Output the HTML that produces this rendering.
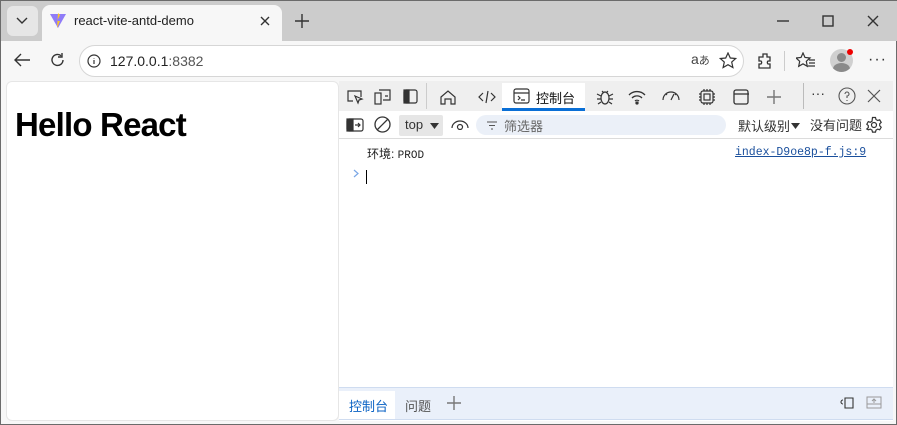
<!DOCTYPE html><html><head><meta charset="utf-8"><style>
*{margin:0;padding:0;box-sizing:border-box}
body{width:897px;height:425px;overflow:hidden;background:#f7f7f7;font-family:"Liberation Sans","Noto Sans CJK SC",sans-serif;position:relative;border:1px solid #6b6b6b}
.a{position:absolute}
.ic{position:absolute;stroke:#333;fill:none;stroke-width:1.4}
</style></head><body>
<div class="a" style="left:0;top:0;width:897px;height:40px;background:#cccccc"></div>
<div class="a" style="left:6px;top:5px;width:31px;height:30px;background:#e6e6e6;border-radius:6px"></div>
<svg class="ic" style="left:14px;top:14px" width="14" height="10"><path d="M2 3l5 5 5-5"/></svg>
<div class="a" style="left:41px;top:4px;width:240px;height:36px;background:#f7f7f7;border-radius:8px 8px 0 0"></div>
<svg class="a" style="left:48px;top:11px" width="18" height="17"><path d="M1 2l8 14 8-14z" fill="#8f7cf8"/><path d="M9 1l2 2-3 6 3 0-3 7" fill="#ffc820"/></svg>
<div class="a" style="left:73px;top:12px;font-size:13px;color:#222">react-vite-antd-demo</div>
<svg class="ic" style="left:259px;top:15px" width="10" height="10"><path d="M1 1l8 8M9 1l-8 8"/></svg>
<svg class="ic" style="left:293px;top:12px" width="16" height="16"><path d="M8 1v14M1 8h14"/></svg>
<svg class="ic" style="left:776px;top:19px" width="12" height="2"><path d="M0 1h12"/></svg>
<svg class="ic" style="left:821px;top:14px" width="12" height="12"><rect x="1" y="1" width="10" height="10"/></svg>
<svg class="ic" style="left:866px;top:14px" width="12" height="12"><path d="M1 1l10 10M11 1l-10 10"/></svg>
<svg class="ic" style="left:12px;top:52px" width="18" height="14"><path d="M17 7H2M8 1L2 7l6 6"/></svg>
<svg class="ic" style="left:49px;top:51px" width="16" height="16"><path d="M13 8a5.5 5.5 0 1 1-2-4.3M12 1v4h-4"/></svg>
<div class="a" style="left:78px;top:44px;width:665px;height:32px;background:#fff;border:1px solid #d6d6d6;border-radius:16px"></div>
<svg class="ic" style="left:86px;top:53px;stroke-width:1.2" width="14" height="14"><circle cx="7" cy="7" r="6"/><path d="M7 6v4M7 4v.5"/></svg>
<div class="a" style="left:109px;top:52px;font-size:14px;color:#222">127.0.0.1<span style="color:#555">:8382</span></div>
<div class="a" style="left:690px;top:50px;font-size:14px;color:#444">a<span style="font-size:11px">あ</span></div>
<svg class="ic" style="left:718px;top:51px;stroke-width:1.2" width="18" height="17"><path d="M9 1l2.3 5 5.4.5-4 3.6 1.2 5.4L9 12.7 4.1 15.5l1.2-5.4-4-3.6 5.4-.5z"/></svg>
<svg class="ic" style="left:755px;top:51px;stroke-width:1.3" width="18" height="18"><path d="M7 2h4v3h3v4h-2a2 2 0 0 0 0 3h2v4H3v-4h2a2 2 0 0 0 0-3H3V5h4z"/></svg>
<div class="a" style="left:783px;top:50px;width:1px;height:20px;background:#ccc"></div>
<svg class="ic" style="left:795px;top:51px;stroke-width:1.2" width="20" height="17"><path d="M7 1l2 4.5 5 .5-3.7 3.3 1 5L7 11.8 2.7 14.3l1-5L0 6l5-.5zM13 8h6M13 11h6M12 14h7"/></svg>
<div class="a" style="left:829px;top:48px;width:23px;height:23px;border-radius:50%;background:#d0d0d0;overflow:hidden"><div class="a" style="left:7px;top:4px;width:9px;height:9px;border-radius:50%;background:#8a8a8a"></div><div class="a" style="left:3px;top:14px;width:17px;height:12px;border-radius:50%;background:#8a8a8a"></div></div>
<div class="a" style="left:846px;top:48px;width:6px;height:6px;border-radius:50%;background:#e00"></div>
<div class="a" style="left:867px;top:50px;font-size:16px;color:#333;letter-spacing:1px">···</div>
<div class="a" style="left:5px;top:80px;width:333px;height:340px;background:#fff;border-radius:6px;border:1px solid #e6e6e6"></div>
<div class="a" style="left:14px;top:105px;font-size:33px;font-weight:bold;color:#000;letter-spacing:-0.8px">Hello React</div>
<div class="a" style="left:338px;top:80px;width:554px;height:340px;background:#fff"></div>
<div class="a" style="left:338px;top:80px;width:554px;height:30px;background:#efefef"></div>
<svg class="ic" style="left:345px;top:88px;stroke-width:1.2" width="18" height="16"><path d="M7 12H2V2h13v6M9 7l7 3-3 1-1 3z"/></svg>
<svg class="ic" style="left:373px;top:87px;stroke-width:1.2" width="18" height="18"><rect x="1" y="5" width="6" height="11"/><path d="M5 2h11v10H9M11 8h3"/></svg>
<svg class="ic" style="left:402px;top:88px;stroke-width:1.2" width="16" height="16"><rect x="1" y="1" width="13" height="13" rx="2"/><rect x="1" y="1" width="5" height="13" fill="#333"/></svg>
<div class="a" style="left:425px;top:82px;width:1px;height:26px;background:#ccc"></div>
<svg class="ic" style="left:438px;top:88px;stroke-width:1.2" width="18" height="16"><path d="M2 8l7-6 7 6v7h-4v-5H6v5H2z"/></svg>
<svg class="ic" style="left:476px;top:88px;stroke-width:1.2" width="20" height="16"><path d="M6 4L2 8l4 4M14 4l4 4-4 4M11 2L9 14"/></svg>
<div class="a" style="left:501px;top:82px;width:83px;height:28px;background:#fff"></div>
<div class="a" style="left:501px;top:107px;width:83px;height:3px;background:#0a6fd6"></div>
<svg class="ic" style="left:512px;top:87px;stroke-width:1.2" width="18" height="17"><rect x="1" y="1" width="15" height="14" rx="2"/><path d="M1 5h15M5 8l2 2-2 2M8 12h4"/></svg>
<div class="a" style="left:535px;top:87px;font-size:13px;color:#111">控制台</div>
<svg class="ic" style="left:595px;top:87px;stroke-width:1.2" width="18" height="18"><ellipse cx="9" cy="10" rx="4" ry="6"/><path d="M1 6l4 2M17 6l-4 2M1 11h4M17 11h-4M2 16l3-2M16 16l-3-2M6 3l2 2M12 3l-2 2"/></svg>
<svg class="ic" style="left:626px;top:88px;stroke-width:1.3" width="20" height="16"><path d="M2 6a11 11 0 0 1 16 0M5 9a7 7 0 0 1 10 0M8 12a3 3 0 0 1 4 0"/><circle cx="10" cy="14" r="1" fill="#333"/></svg>
<svg class="ic" style="left:660px;top:88px;stroke-width:1.2" width="20" height="16"><path d="M2 11a8 8 0 0 1 16 0M10 11l3-6M6 6l-1-1M14 6l1-1"/></svg>
<svg class="ic" style="left:697px;top:87px;stroke-width:1.2" width="18" height="18"><rect x="3" y="3" width="12" height="12" rx="2"/><rect x="6" y="6" width="6" height="6"/><path d="M6 1v2M9 1v2M12 1v2M6 15v2M9 15v2M12 15v2M1 6h2M1 9h2M1 12h2M15 6h2M15 9h2M15 12h2"/></svg>
<svg class="ic" style="left:732px;top:88px;stroke-width:1.3" width="17" height="16"><rect x="1" y="1" width="14" height="14" rx="2"/><path d="M1 5h15"/></svg>
<svg class="ic" style="left:765px;top:88px;stroke:#777" width="16" height="16"><path d="M8 1v14M1 8h14"/></svg>
<div class="a" style="left:802px;top:82px;width:1px;height:26px;background:#bbb"></div>
<div class="a" style="left:810px;top:84px;font-size:14px;color:#333">···</div>
<svg class="ic" style="left:837px;top:86px;stroke-width:1.1;stroke:#555" width="18" height="18"><circle cx="9" cy="9" r="8"/><path d="M7 7a2 2 0 1 1 2 2v2M9 13v1"/></svg>
<svg class="ic" style="left:866px;top:88px;stroke:#555;stroke-width:1.2" width="14" height="14"><path d="M1 1l12 12M13 1L1 13"/></svg>
<div class="a" style="left:338px;top:137px;width:554px;height:1px;background:#dcdcdc"></div>
<svg class="ic" style="left:345px;top:117px;stroke-width:1.2" width="18" height="14"><rect x="1" y="1" width="16" height="12" rx="2"/><rect x="1" y="1" width="6" height="12" fill="#333"/><path d="M9 7h5M12 5l2 2-2 2"/></svg>
<svg class="ic" style="left:373px;top:115px;stroke-width:1.3" width="17" height="17"><circle cx="8.5" cy="8.5" r="7.5"/><path d="M3 14L14 3"/></svg>
<div class="a" style="left:398px;top:114px;width:44px;height:21px;background:#e6e6e6;border-radius:2px"></div>
<div class="a" style="left:404px;top:116px;font-size:13px;color:#333">top</div>
<svg class="a" style="left:429px;top:122px" width="9" height="6"><path d="M0 0h9L4.5 6z" fill="#333"/></svg>
<svg class="ic" style="left:450px;top:117px;stroke-width:1.2" width="18" height="12"><path d="M1 10a8 7 0 0 1 16 0"/><circle cx="9" cy="9" r="2.5"/></svg>
<div class="a" style="left:475px;top:114px;width:250px;height:20px;background:#ebf0f8;border-radius:10px"></div>
<svg class="ic" style="left:486px;top:120px;stroke-width:1.1;stroke:#555" width="10" height="9"><path d="M0 1h10M2 4.5h6M4 8h2"/></svg>
<div class="a" style="left:503px;top:115px;font-size:13px;color:#666">筛选器</div>
<div class="a" style="left:737px;top:115px;font-size:13px;color:#333">默认级别</div>
<svg class="a" style="left:790px;top:122px" width="9" height="6"><path d="M0 0h9L4.5 6z" fill="#333"/></svg>
<div class="a" style="left:809px;top:114px;font-size:13px;color:#333">没有问题</div>
<svg class="ic" style="left:864px;top:115px;stroke-width:1.2" width="18" height="18"><circle cx="9" cy="9" r="2.5"/><path d="M7.5 1.5h3l.5 2 1.7 1 2-.7 1.5 2.6-1.5 1.4v2l1.5 1.4-1.5 2.6-2-.7-1.7 1-.5 2h-3l-.5-2-1.7-1-2 .7L1.8 13l1.5-1.4v-2L1.8 8.2 3.3 5.6l2 .7 1.7-1z"/></svg>
<div class="a" style="left:366px;top:144px;font-size:12px;color:#222">环境: <span style="font-family:'Liberation Mono',monospace;font-size:11px">PROD</span></div>
<div class="a" style="left:734px;top:145px;font-size:11.5px;font-family:'Liberation Mono',monospace;color:#1a4f9c;text-decoration:underline">index-D9oe8p-f.js:9</div>
<svg class="a" style="left:352px;top:168px" width="6" height="9"><path d="M1 1l4 3.5L1 8" stroke="#7aa7e6" fill="none" stroke-width="1.2"/></svg>
<div class="a" style="left:365px;top:169px;width:1px;height:14px;background:#000"></div>
<div class="a" style="left:338px;top:386px;width:554px;height:33px;background:#eaf0fa;border-top:1px solid #cfdcf0;border-bottom:1px solid #cfdcf0"></div>
<div class="a" style="left:338px;top:390px;width:56px;height:28px;background:#fff"></div>
<div class="a" style="left:348px;top:395px;font-size:13px;color:#0a62c4">控制台</div>
<div class="a" style="left:404px;top:395px;font-size:13px;color:#555">问题</div>
<svg class="ic" style="left:446px;top:395px;stroke:#777" width="14" height="14"><path d="M7 0v14M0 7h14"/></svg>
<svg class="ic" style="left:838px;top:395px;stroke-width:1.1" width="16" height="14"><path d="M6 2h8v10H6zM4 4a2 2 0 0 0 0 4"/></svg>
<svg class="ic" style="left:865px;top:395px;stroke-width:1;stroke:#999" width="16" height="13"><rect x="1" y="1" width="14" height="11"/><path d="M1 8h14M8 3v4M6 5l2-2 2 2"/></svg>
</body></html>
